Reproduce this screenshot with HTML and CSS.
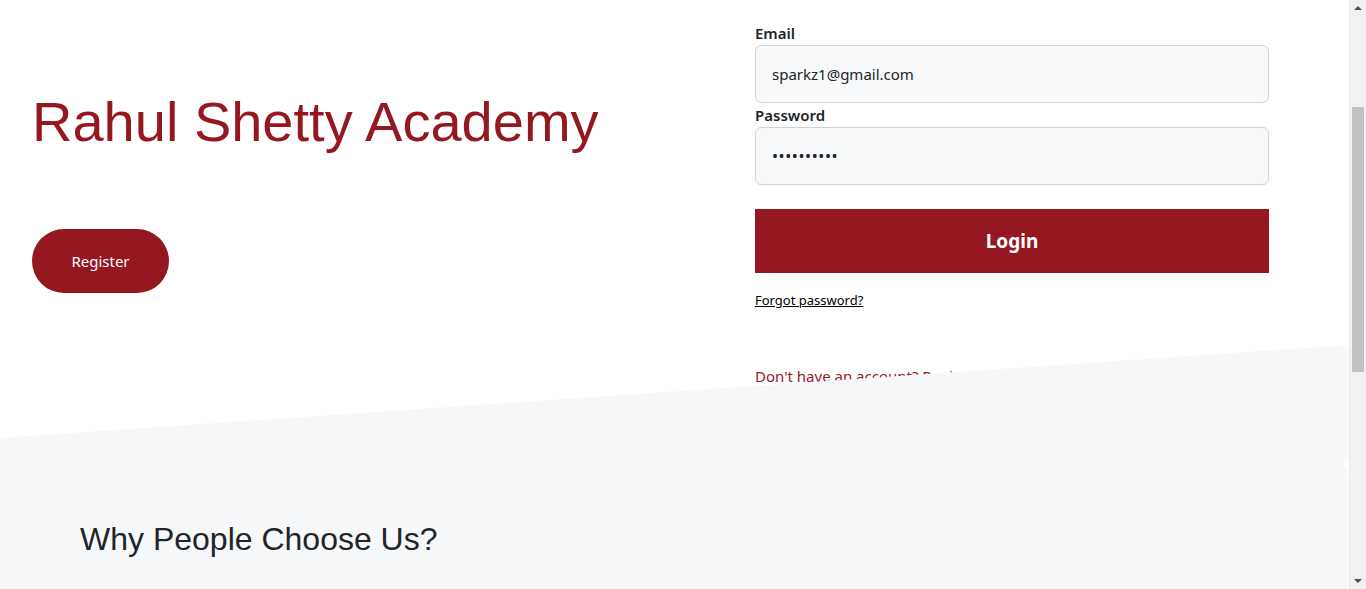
FILE: index.html
```html
<!DOCTYPE html>
<html lang="en">
<head>
<meta charset="utf-8">
<title>Rahul Shetty Academy - Login</title>
<link rel="stylesheet" href="styles.css">
</head>
<body>
<section class="hero">
  <div class="hero-left">
    <h1 class="brand">Rahul Shetty Academy</h1>
    <button class="btn-register" type="button">Register</button>
  </div>
  <form class="hero-right">
    <label class="field-label" for="email">Email</label>
    <input class="field-input" id="email" type="text" value="sparkz1@gmail.com">
    <label class="field-label" for="password">Password</label>
    <input class="field-input field-password" id="password" type="password" value="abcdefghij">
    <button class="btn-login" type="button">Login</button>
    <a class="forgot" href="#">Forgot password?</a>
    <p class="signup">Don't have an account? <a href="#" class="signup-link">Register here</a></p>
  </form>
</section>
<section class="why">
  <svg class="corner" width="10" height="17" viewBox="0 0 10 17"><path d="M0 0 H10 V17 C8 8 5 3 0 0 Z" fill="#ffffff"/></svg>
  <h2 class="why-title">Why People Choose Us?</h2>
</section>
<div class="scrollbar" aria-hidden="true">
  <svg class="sb-arrow" width="16" height="17" viewBox="0 0 16 17"><path d="M4 10 L8 6 L12 10 Z" fill="#505050"/></svg>
  <div class="sb-track"><div class="sb-thumb"></div></div>
  <svg class="sb-arrow" width="16" height="17" viewBox="0 0 16 17"><path d="M4 7 L12 7 L8 11 Z" fill="#505050"/></svg>
</div>
</body>
</html>
```
FILE: styles.css
```css
html, body {
  margin: 0;
  padding: 0;
}
body {
  font-family: "Noto Sans", "Open Sans", sans-serif;
  color: #212529;
  background: #ffffff;
  padding-right: 16px;
  overflow: hidden;
}
.hero {
  display: flex;
  padding: 21px 0 0 32px;
}
.hero-left {
  width: 723px;
  padding-top: 66px;
}
.brand {
  margin: 0;
  font-family: "Liberation Sans", Arial, sans-serif;
  font-weight: normal;
  font-size: 56px;
  line-height: 69px;
  color: #95171f;
  white-space: nowrap;
}
.btn-register {
  margin-top: 73px;
  width: 137px;
  height: 64px;
  border: none;
  border-radius: 32px;
  background: #95171f;
  color: #ffffff;
  font-family: "Noto Sans", sans-serif;
  font-size: 15px;
  cursor: pointer;
}
.hero-right {
  width: 514px;
  display: flex;
  flex-direction: column;
}
.field-label {
  display: block;
  font-weight: 600;
  font-size: 15px;
  line-height: 24px;
  color: #212529;
}
.field-input {
  box-sizing: border-box;
  width: 100%;
  height: 58px;
  margin: 0;
  padding: 0 16px;
  border: 1px solid #ced4da;
  border-radius: 6px;
  background: #f8f9fa;
  font-family: "Noto Sans", sans-serif;
  font-size: 15px;
  color: #212529;
  outline: none;
}
.field-password {
  font-size: 16px;
  letter-spacing: 0.6px;
}
.btn-login {
  margin-top: 24px;
  height: 64px;
  width: 100%;
  border: none;
  background: #95171f;
  color: #ffffff;
  font-family: "Noto Sans", sans-serif;
  font-weight: 700;
  font-size: 19px;
  cursor: pointer;
}
.forgot {
  margin-top: 17px;
  align-self: flex-start;
  font-size: 13px;
  line-height: 20px;
  color: #000000;
  text-decoration: underline;
}
.signup {
  margin: 54px 0 0;
  font-size: 15px;
  line-height: 24px;
  color: #95171f;
}
.signup-link {
  color: #95171f;
  text-decoration: none;
}
.why {
  position: relative;
  margin-top: -43px;
  min-height: 900px;
  padding: 175px 0 0 80px;
  background: #f7f8fa;
  clip-path: polygon(0 93px, 100% 0, 100% 100%, 0 100%);
}
.corner {
  position: absolute;
  top: 118px;
  right: 0;
}
.why-title {
  margin: 0;
  font-family: "Liberation Sans", Arial, sans-serif;
  font-weight: normal;
  font-size: 32px;
  line-height: 39px;
  color: #212529;
}
.scrollbar {
  position: fixed;
  top: 0;
  right: 0;
  width: 16px;
  height: 100vh;
  display: flex;
  flex-direction: column;
  background: #f1f1f1;
  border-left: 1px solid #ececec;
}
.sb-arrow {
  flex: none;
  display: block;
}
.sb-track {
  flex: 1;
  padding-top: 90px;
}
.sb-thumb {
  width: 12px;
  height: 265px;
  margin-left: 2px;
  background: #c1c1c1;
}
```
